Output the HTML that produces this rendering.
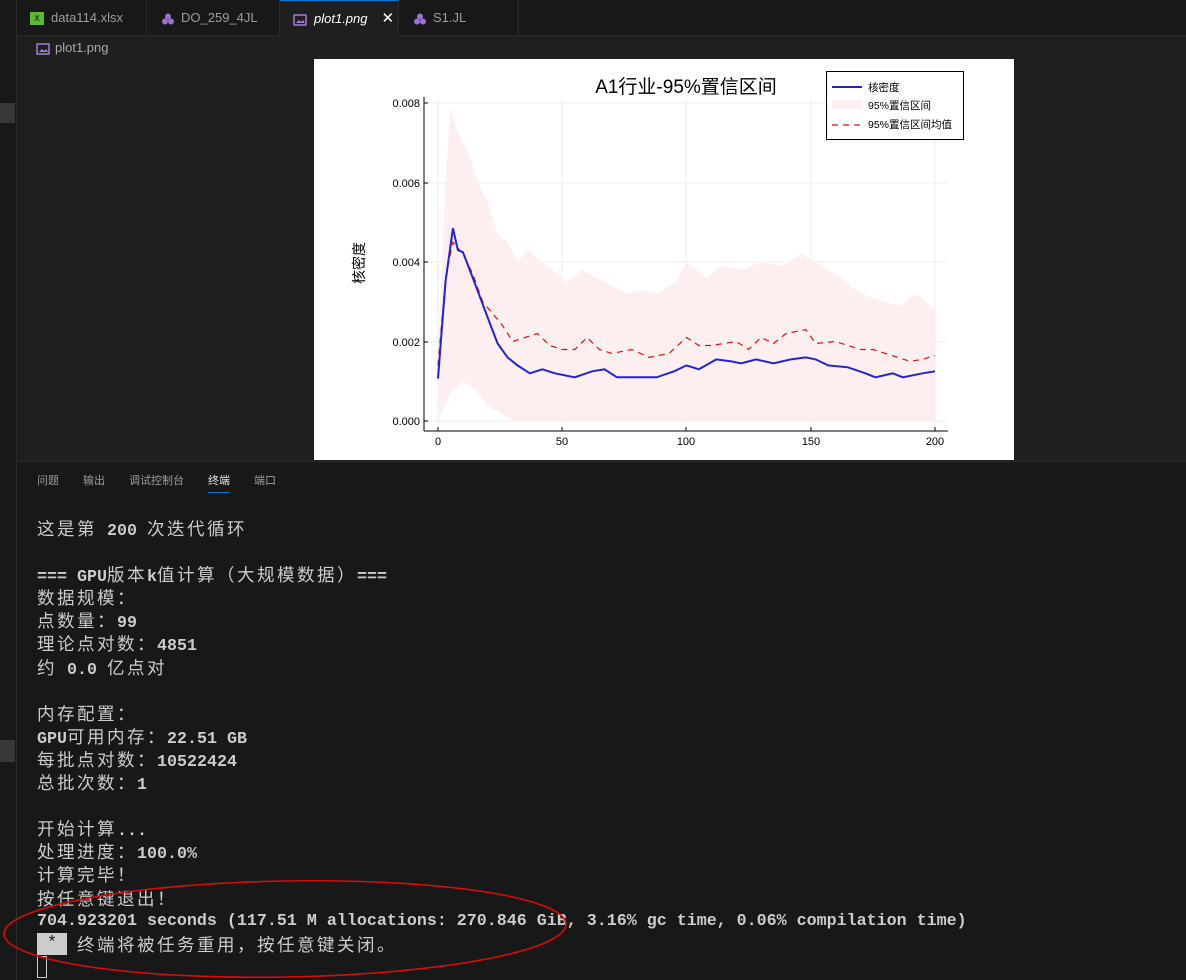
<!DOCTYPE html>
<html><head><meta charset="utf-8"><style>
*{margin:0;padding:0;box-sizing:border-box}
html,body{width:1186px;height:980px;overflow:hidden}
body{background:#1f1f1f;position:relative;font-family:"Liberation Sans","Noto Sans CJK SC",sans-serif}
.side{position:absolute;left:0;top:0;width:17px;height:980px;background:#181818;border-right:1px solid #2b2b2b}
.tabbar{position:absolute;left:17px;top:0;width:1169px;height:36px;background:#181818;border-bottom:1px solid #2b2b2b}
.tab{position:absolute;top:0;height:36px;font-size:13px;color:#9d9d9d;line-height:36px;border-right:1px solid #2b2b2b}
.tab.act{background:#1f1f1f;color:#fff;border-top:1px solid #0078d4;font-style:italic}
.ic{display:inline-block;vertical-align:middle;margin-right:7px}
.crumb{position:absolute;left:36px;top:40px;font-size:13px;color:#a9a9a9}
.panel{position:absolute;left:17px;top:461px;width:1169px;height:519px;background:#181818;border-top:1px solid #2b2b2b}
.ptab{position:absolute;top:10px;font-size:11px;color:#9d9d9d}
.term{position:absolute;left:37px;top:517px;font-family:"Liberation Mono","Noto Sans CJK SC",monospace;font-weight:bold;font-size:16.67px;color:#cccccc}
.term div{height:23.1px;line-height:23px;overflow:visible;white-space:pre}
.c{font-weight:normal;font-size:17.5px;letter-spacing:2.5px;font-family:"Noto Sans CJK SC",sans-serif;line-height:23px}
</style></head><body>
<div class="side"><div style="position:absolute;top:103px;left:0;width:15px;height:20px;background:#383838"></div><div style="position:absolute;top:740px;left:0;width:15px;height:22px;background:#383838"></div></div>
<div class="tabbar">
<div class="tab" style="left:0;width:130px;padding-left:13px"><span class="ic" style="width:14px;height:13px;background:#5fb832;color:#1b4a0a;font-size:8px;line-height:13px;text-align:center;font-weight:bold">X</span>data114.xlsx</div>
<div class="tab" style="left:130px;width:133px;padding-left:15px"><svg class="ic" width="12" height="12"><circle cx="6" cy="3.5" r="3" fill="#9b6fd6"/><circle cx="3" cy="8.5" r="3" fill="#9b6fd6"/><circle cx="9" cy="8.5" r="3" fill="#9b6fd6"/></svg>DO_259_4JL</div>
<div class="tab act" style="left:263px;width:119px;padding-left:13px"><svg class="ic" width="14" height="12"><rect x="1" y="1" width="12" height="10" fill="none" stroke="#a77bd8" stroke-width="1.5"/><path d="M3 9l3-3 2 2 2-2 2 3z" fill="#a77bd8"/></svg>plot1.png<span style="font-style:normal;margin-left:14px;font-size:15px">✕</span></div>
<div class="tab" style="left:382px;width:120px;padding-left:15px"><svg class="ic" width="12" height="12"><circle cx="6" cy="3.5" r="3" fill="#9b6fd6"/><circle cx="3" cy="8.5" r="3" fill="#9b6fd6"/><circle cx="9" cy="8.5" r="3" fill="#9b6fd6"/></svg>S1.JL</div>
</div>
<div class="crumb"><svg class="ic" width="14" height="12" style="margin-right:5px"><rect x="1" y="1" width="12" height="10" fill="none" stroke="#a77bd8" stroke-width="1.5"/><path d="M3 9l3-3 2 2 2-2 2 3z" fill="#a77bd8"/></svg>plot1.png</div>
<svg style="position:absolute;left:0;top:0" width="1186" height="980">
<rect x="314" y="59" width="700" height="401" fill="#fff"/>
<g stroke="#ececec" stroke-width="1">
<line x1="438" y1="97" x2="438" y2="431"/><line x1="562" y1="97" x2="562" y2="431"/><line x1="686" y1="97" x2="686" y2="431"/><line x1="811" y1="97" x2="811" y2="431"/><line x1="935" y1="97" x2="935" y2="431"/>
<line x1="424" y1="103" x2="948" y2="103"/><line x1="424" y1="183" x2="948" y2="183"/><line x1="424" y1="262" x2="948" y2="262"/><line x1="424" y1="342" x2="948" y2="342"/><line x1="424" y1="421" x2="948" y2="421"/>
</g>
<polygon fill="#fdeef0" points="438,357.4 445.5,182.5 450.4,107 457.9,134.8 467.8,150.7 477.8,182.5 487.7,202.4 497.6,234.2 507.6,242.1 517.5,262 527.5,250.1 537.4,258 552.3,270 567.2,281.9 582.1,270 597,277.9 612,285.8 626.9,293.8 641.8,289.8 656.7,293.8 676.6,281.9 686.5,262 706.4,277.9 721.3,266 741.2,270 761,262 780.9,266 800.8,254.1 815.7,262 835.6,273.9 860.5,293.8 885.3,301.7 900.2,305.7 915.1,293.8 935,309.7 935,421 512.6,421 487.7,405.1 475.3,389.2 462.9,381.3 450.4,393.2 438,421"/>
<polyline fill="none" stroke="#e01010" stroke-width="1.2" stroke-dasharray="6,5" points="438,365.4 445.5,277.9 452.9,242.1 462.9,254.1 472.8,273.9 482.7,301.7 492.7,313.7 502.6,325.6 512.6,341.5 525,337.5 537.4,333.6 549.8,345.5 562.3,349.5 574.7,349.5 587.1,337.5 599.5,349.5 611.95,353.4 631.8,349.5 649.2,357.4 669.1,353.4 686.5,337.5 698.9,345.5 711.4,345.5 736.2,341.5 748.6,349.5 761,337.5 773.5,343.5 785.9,333.6 805.8,329.6 815.7,343.5 835.6,341.5 848,345.5 860.5,349.5 872.9,349.5 885.3,353.4 897.7,357.4 910.2,361.4 922.6,359.4 935,355.4"/>
<polyline fill="none" stroke="#2323d8" stroke-width="2" points="438,378.5 445.5,281.9 452.9,228.2 457.9,250.1 462.9,252.1 472.8,277.9 487.7,317.6 497.6,343.5 507.6,357.4 517.5,365.4 529.9,373.3 542.4,369.3 554.8,373.3 574.7,377.3 592.1,371.3 604.5,369.3 616.9,377.3 636.8,377.3 656.7,377.3 674.1,371.3 686.5,365.4 698.9,369.3 716.3,359.4 731.2,361.4 741.2,363.4 756.1,359.4 773.5,363.4 790.9,359.4 805.8,357.4 815.7,359.4 828.1,365.4 848,367.3 865.4,373.3 875.4,377.3 892.8,373.3 902.7,377.3 922.6,373.3 935,371.3"/>
<g stroke="#000" stroke-width="1"><line x1="424" y1="97" x2="424" y2="431"/><line x1="424" y1="431" x2="948" y2="431"/>
<line x1="424" y1="103" x2="428" y2="103"/><line x1="424" y1="183" x2="428" y2="183"/><line x1="424" y1="262" x2="428" y2="262"/><line x1="424" y1="342" x2="428" y2="342"/><line x1="424" y1="421" x2="428" y2="421"/>
<line x1="438" y1="431" x2="438" y2="427"/><line x1="562" y1="431" x2="562" y2="427"/><line x1="686" y1="431" x2="686" y2="427"/><line x1="811" y1="431" x2="811" y2="427"/><line x1="935" y1="431" x2="935" y2="427"/></g>
<g font-family="Liberation Sans,sans-serif" font-size="11" fill="#000" text-anchor="end">
<text x="420" y="107">0.008</text><text x="420" y="187">0.006</text><text x="420" y="266">0.004</text><text x="420" y="346">0.002</text><text x="420" y="425">0.000</text></g>
<g font-family="Liberation Sans,sans-serif" font-size="11" fill="#000" text-anchor="middle">
<text x="438" y="445">0</text><text x="562" y="445">50</text><text x="686" y="445">100</text><text x="811" y="445">150</text><text x="935" y="445">200</text></g>
<text x="686" y="93" text-anchor="middle" font-family="Liberation Sans,Noto Sans CJK SC,sans-serif" font-size="19" fill="#000">A1行业-95%置信区间</text>
<text transform="translate(364,263) rotate(-90)" text-anchor="middle" font-family="Noto Sans CJK SC,sans-serif" font-size="14" fill="#000">核密度</text>
<rect x="826.5" y="71.5" width="137" height="68" fill="#fff" stroke="#000"/>
<line x1="832" y1="87" x2="862" y2="87" stroke="#2323d8" stroke-width="2"/>
<rect x="832" y="100" width="30" height="9" fill="#fdeef0"/>
<line x1="832" y1="125" x2="862" y2="125" stroke="#e01010" stroke-width="1.2" stroke-dasharray="6,5"/>
<g font-family="Liberation Sans,Noto Sans CJK SC,sans-serif" font-size="10.5" fill="#000"><text x="868" y="91">核密度</text><text x="868" y="109">95%置信区间</text><text x="868" y="128">95%置信区间均值</text></g>
</svg>
<div class="panel">
<div class="ptab" style="left:20px">问题</div><div class="ptab" style="left:66px">输出</div><div class="ptab" style="left:112px">调试控制台</div>
<div class="ptab" style="left:191px;color:#e7e7e7">终端<div style="height:1px;background:#0078d4;margin-top:4px"></div></div><div class="ptab" style="left:237px">端口</div>
</div>
<div class="term"><div><span class="c">这是第</span> 200 <span class="c">次迭代循环</span></div><div></div><div>=== GPU<span class="c">版本</span>k<span class="c">值计算（大规模数据）</span>===</div><div><span class="c">数据规模：</span></div><div><span class="c">点数量：</span>99</div><div><span class="c">理论点对数：</span>4851</div><div><span class="c">约</span> 0.0 <span class="c">亿点对</span></div><div></div><div><span class="c">内存配置：</span></div><div>GPU<span class="c">可用内存：</span>22.51 GB</div><div><span class="c">每批点对数：</span>10522424</div><div><span class="c">总批次数：</span>1</div><div></div><div><span class="c">开始计算</span>...</div><div><span class="c">处理进度：</span>100.0%</div><div><span class="c">计算完毕！</span></div><div><span class="c">按任意键退出！</span></div><div>704.923201 seconds (117.51 M allocations: 270.846 GiB, 3.16% gc time, 0.06% compilation time)</div><div><span style="display:inline-block;width:30px;height:22px;background:#cccccc;color:#181818;font-weight:normal;text-align:center;line-height:22px;vertical-align:top">*</span> <span class="c">终端将被任务重用，按任意键关闭。</span></div><div><span style="display:inline-block;width:10px;height:22px;border:1px solid #ccc;vertical-align:top"></span></div></div>
<svg style="position:absolute;left:0;top:0" width="1186" height="980"><ellipse cx="285" cy="929" rx="281" ry="48" fill="none" stroke="#d40d0d" stroke-width="1.6" transform="rotate(-1 285 929)"/></svg>
</body></html>
